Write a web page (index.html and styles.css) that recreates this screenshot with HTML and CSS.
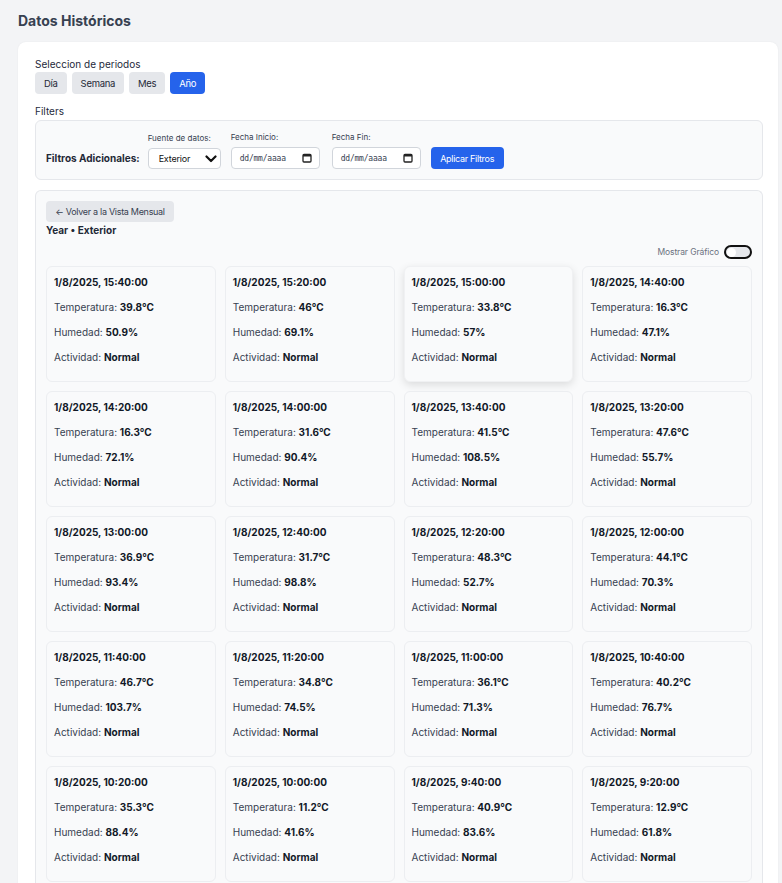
FILE: index.html
```html
<!DOCTYPE html>
<html lang="es">
<head>
<meta charset="utf-8">
<title>Datos Históricos</title>
<link rel="stylesheet" href="styles.css">
</head>
<body>
<div class="page">
  <h1 class="title">Datos Históricos</h1>
  <div class="panel">
    <div class="label">Seleccion de periodos</div>
    <div class="periods">
      <button class="pbtn">Día</button>
      <button class="pbtn">Semana</button>
      <button class="pbtn">Mes</button>
      <button class="pbtn active">Año</button>
    </div>
    <div class="label filters-label">Filters</div>
    <div class="filters">
      <div class="flabel">Filtros Adicionales:</div>
      <div class="field">
        <span class="small">Fuente de datos:</span>
        <div class="select">Exterior
          <svg width="12" height="8" viewBox="0 0 12 8"><path d="M1.5 1.5 L6 6 L10.5 1.5" fill="none" stroke="#111" stroke-width="2.2" stroke-linecap="round" stroke-linejoin="round"/></svg>
        </div>
      </div>
      <div class="field">
        <span class="small">Fecha Inicio:</span>
        <div class="date"><span class="ph">dd/mm/aaaa</span>
          <svg width="10" height="10" viewBox="0 0 10 10"><rect x="1" y="1.5" width="8" height="7.5" rx="1" fill="none" stroke="#222" stroke-width="1.3"/><rect x="1" y="1.5" width="8" height="2" fill="#222"/></svg>
        </div>
      </div>
      <div class="field field-end">
        <span class="small">Fecha Fin:</span>
        <div class="date"><span class="ph">dd/mm/aaaa</span>
          <svg width="10" height="10" viewBox="0 0 10 10"><rect x="1" y="1.5" width="8" height="7.5" rx="1" fill="none" stroke="#222" stroke-width="1.3"/><rect x="1" y="1.5" width="8" height="2" fill="#222"/></svg>
        </div>
      </div>
      <button class="apply">Aplicar Filtros</button>
    </div>

    <div class="data">
      <button class="back">← Volver a la Vista Mensual</button>
      <div class="subtitle">Year • Exterior</div>
      <div class="chart-toggle"><span>Mostrar Gráfico</span><span class="toggle"><span class="knob"></span></span></div>
      <div class="grid">
        <div class="card"><div class="ct">1/8/2025, 15:40:00</div><div class="row">Temperatura: <b>39.8°C</b></div><div class="row">Humedad: <b>50.9%</b></div><div class="row">Actividad: <b>Normal</b></div></div>
        <div class="card"><div class="ct">1/8/2025, 15:20:00</div><div class="row">Temperatura: <b>46°C</b></div><div class="row">Humedad: <b>69.1%</b></div><div class="row">Actividad: <b>Normal</b></div></div>
        <div class="card hover"><div class="ct">1/8/2025, 15:00:00</div><div class="row">Temperatura: <b>33.8°C</b></div><div class="row">Humedad: <b>57%</b></div><div class="row">Actividad: <b>Normal</b></div></div>
        <div class="card"><div class="ct">1/8/2025, 14:40:00</div><div class="row">Temperatura: <b>16.3°C</b></div><div class="row">Humedad: <b>47.1%</b></div><div class="row">Actividad: <b>Normal</b></div></div>

        <div class="card"><div class="ct">1/8/2025, 14:20:00</div><div class="row">Temperatura: <b>16.3°C</b></div><div class="row">Humedad: <b>72.1%</b></div><div class="row">Actividad: <b>Normal</b></div></div>
        <div class="card"><div class="ct">1/8/2025, 14:00:00</div><div class="row">Temperatura: <b>31.6°C</b></div><div class="row">Humedad: <b>90.4%</b></div><div class="row">Actividad: <b>Normal</b></div></div>
        <div class="card"><div class="ct">1/8/2025, 13:40:00</div><div class="row">Temperatura: <b>41.5°C</b></div><div class="row">Humedad: <b>108.5%</b></div><div class="row">Actividad: <b>Normal</b></div></div>
        <div class="card"><div class="ct">1/8/2025, 13:20:00</div><div class="row">Temperatura: <b>47.6°C</b></div><div class="row">Humedad: <b>55.7%</b></div><div class="row">Actividad: <b>Normal</b></div></div>

        <div class="card"><div class="ct">1/8/2025, 13:00:00</div><div class="row">Temperatura: <b>36.9°C</b></div><div class="row">Humedad: <b>93.4%</b></div><div class="row">Actividad: <b>Normal</b></div></div>
        <div class="card"><div class="ct">1/8/2025, 12:40:00</div><div class="row">Temperatura: <b>31.7°C</b></div><div class="row">Humedad: <b>98.8%</b></div><div class="row">Actividad: <b>Normal</b></div></div>
        <div class="card"><div class="ct">1/8/2025, 12:20:00</div><div class="row">Temperatura: <b>48.3°C</b></div><div class="row">Humedad: <b>52.7%</b></div><div class="row">Actividad: <b>Normal</b></div></div>
        <div class="card"><div class="ct">1/8/2025, 12:00:00</div><div class="row">Temperatura: <b>44.1°C</b></div><div class="row">Humedad: <b>70.3%</b></div><div class="row">Actividad: <b>Normal</b></div></div>

        <div class="card"><div class="ct">1/8/2025, 11:40:00</div><div class="row">Temperatura: <b>46.7°C</b></div><div class="row">Humedad: <b>103.7%</b></div><div class="row">Actividad: <b>Normal</b></div></div>
        <div class="card"><div class="ct">1/8/2025, 11:20:00</div><div class="row">Temperatura: <b>34.8°C</b></div><div class="row">Humedad: <b>74.5%</b></div><div class="row">Actividad: <b>Normal</b></div></div>
        <div class="card"><div class="ct">1/8/2025, 11:00:00</div><div class="row">Temperatura: <b>36.1°C</b></div><div class="row">Humedad: <b>71.3%</b></div><div class="row">Actividad: <b>Normal</b></div></div>
        <div class="card"><div class="ct">1/8/2025, 10:40:00</div><div class="row">Temperatura: <b>40.2°C</b></div><div class="row">Humedad: <b>76.7%</b></div><div class="row">Actividad: <b>Normal</b></div></div>

        <div class="card"><div class="ct">1/8/2025, 10:20:00</div><div class="row">Temperatura: <b>35.3°C</b></div><div class="row">Humedad: <b>88.4%</b></div><div class="row">Actividad: <b>Normal</b></div></div>
        <div class="card"><div class="ct">1/8/2025, 10:00:00</div><div class="row">Temperatura: <b>11.2°C</b></div><div class="row">Humedad: <b>41.6%</b></div><div class="row">Actividad: <b>Normal</b></div></div>
        <div class="card"><div class="ct">1/8/2025, 9:40:00</div><div class="row">Temperatura: <b>40.9°C</b></div><div class="row">Humedad: <b>83.6%</b></div><div class="row">Actividad: <b>Normal</b></div></div>
        <div class="card"><div class="ct">1/8/2025, 9:20:00</div><div class="row">Temperatura: <b>12.9°C</b></div><div class="row">Humedad: <b>61.8%</b></div><div class="row">Actividad: <b>Normal</b></div></div>
      </div>
    </div>
  </div>
</div>
</body>
</html>
```

FILE: styles.css
```css
* { box-sizing: border-box; }
html, body { margin: 0; padding: 0; }
body {
  background: #f3f4f6;
  font-family: Inter, "Noto Sans", sans-serif;
  color: #1f2937;
  overflow: hidden;
}
.page { padding: 12px 0 0 18px; }
.title {
  margin: 0 0 12px 0;
  font-size: 14px;
  line-height: 18px;
  font-weight: 700;
  color: #374151;
}
.panel {
  width: 760px;
  background: #ffffff;
  border-radius: 8px;
  padding: 15px 15px 0 17px;
  box-shadow: 0 0 2px rgba(0,0,0,0.06);
}
.label {
  font-size: 10px;
  line-height: 14px;
  color: #1e293b;
}
.periods { display: flex; gap: 5px; margin-top: 1px; }
.pbtn {
  height: 22px;
  padding: 0 9px;
  border: none;
  border-radius: 4px;
  background: #e5e7eb;
  color: #1f2937;
  font-family: inherit;
  font-size: 9.5px;
  letter-spacing: -0.3px;
}
.pbtn.active { background: #2563eb; color: #fff; }
.filters-label { margin-top: 10px; }
.filters {
  margin-top: 2px;
  width: 728px;
  height: 60px;
  background: #f9fafb;
  border: 1px solid #e5e7eb;
  border-radius: 6px;
  display: flex;
  align-items: flex-end;
  padding: 0 10px 10px 10px;
  gap: 10px;
}
.flabel {
  font-size: 10px;
  font-weight: 700;
  line-height: 22px;
  color: #1f2937;
  margin-right: -2px;
}
.field { display: flex; flex-direction: column; gap: 5px; }
.field-end { margin-left: 2px; }
.small { font-size: 8px; color: #374151; line-height: 10px; }
.select {
  width: 73px; height: 21px;
  background: #fff;
  border: 1px solid #d1d5db;
  border-radius: 4px;
  display: flex; align-items: center; justify-content: space-between;
  padding: 0 3px 0 10px;
  font-size: 9px;
  letter-spacing: -0.2px;
  color: #111;
}
.date {
  width: 89px; height: 22px;
  background: #fff;
  border: 1px solid #d1d5db;
  border-radius: 4px;
  display: flex; align-items: center; justify-content: space-between;
  padding: 0 7px 0 8px;
}
.ph { font-family: "DejaVu Sans Mono", monospace; font-size: 8px; color: #374151; letter-spacing: -0.2px; }
.apply {
  width: 73px; height: 22px;
  background: #2563eb;
  color: #fff;
  border: none;
  border-radius: 4px;
  font-family: inherit;
  font-size: 9px;
  letter-spacing: -0.3px;
}
.data {
  margin-top: 10px;
  width: 728px;
  background: #f9fafb;
  border: 1px solid #e5e7eb;
  border-radius: 6px 6px 0 0;
  border-bottom: none;
  padding: 10px 10px 20px 10px;
}
.back {
  display: block;
  width: 128px; height: 21px;
  border: none;
  border-radius: 4px;
  background: #e5e7eb;
  color: #374151;
  font-family: inherit;
  font-size: 9px;
  letter-spacing: -0.3px;
  padding: 0;
}
.subtitle {
  font-size: 10px;
  font-weight: 700;
  line-height: 14px;
  color: #1f2937;
  margin-top: 1px;
}
.chart-toggle {
  display: flex;
  justify-content: flex-end;
  align-items: center;
  gap: 5px;
  margin-top: 8px;
  height: 14px;
  font-size: 8.5px;
  color: #6b7280;
  letter-spacing: -0.1px;
}
.toggle {
  width: 28px; height: 14px;
  border: 2px solid #111;
  border-radius: 8px;
  background: #e5e7eb;
  display: flex; align-items: center;
  padding-left: 1px;
}
.knob { width: 9px; height: 9px; border-radius: 50%; background: #fff; }
.grid {
  margin-top: 7px;
  display: grid;
  grid-template-columns: repeat(4, 1fr);
  gap: 9px;
}
.card {
  height: 116px;
  background: #f9fafb;
  border: 1px solid #eceef1;
  border-radius: 6px;
  padding: 8px 7px 0 7px;
}
.card.hover { box-shadow: 0 3px 8px rgba(0,0,0,0.12); border-color: #f0f1f3; }
.ct {
  font-size: 10px;
  font-weight: 700;
  line-height: 14px;
  color: #111827;
}
.row {
  margin-top: 11px;
  font-size: 10px;
  line-height: 14px;
  color: #374151;
}
.row b { color: #111827; font-weight: 700; }
```
